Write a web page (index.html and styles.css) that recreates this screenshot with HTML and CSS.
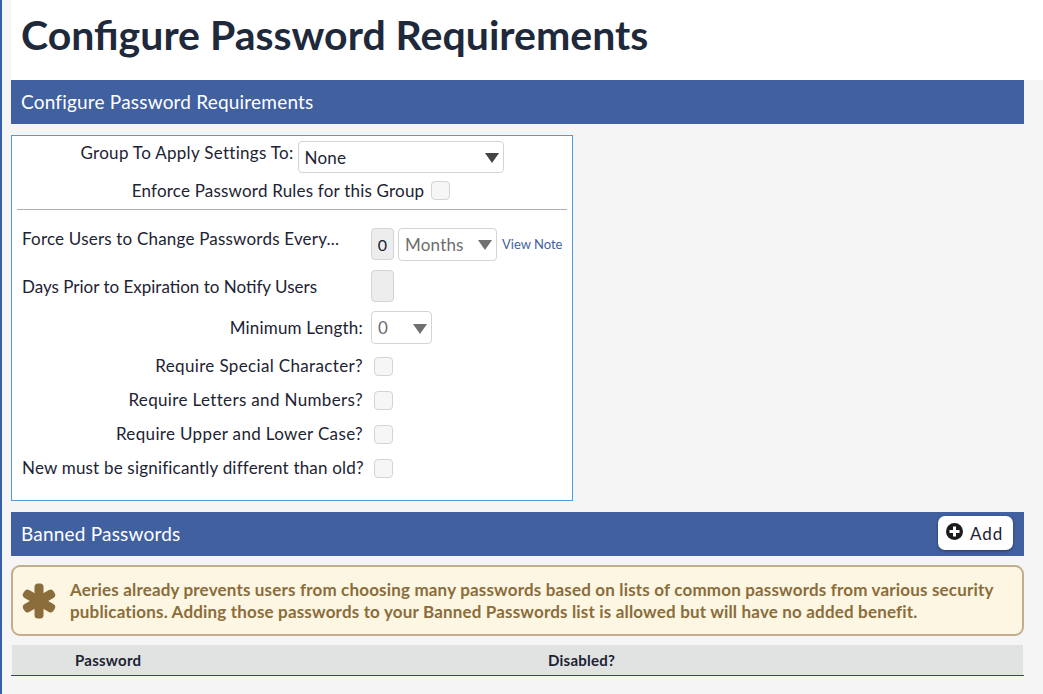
FILE: index.html
```html
<!DOCTYPE html>
<html lang="en">
<head>
  <meta charset="UTF-8">
  <title>Configure Password Requirements</title>
  <link rel="stylesheet" href="styles.css">
</head>
<body>
  <header class="page-head">
    <h1>Configure Password Requirements</h1>
  </header>
  <main class="content">
    <div class="bar">Configure Password Requirements</div>

    <section class="panel">
      <div class="center-row group-row">
        <label>Group To Apply Settings To:</label>
        <div class="select-wrap group-select">
          <select><option>None</option></select>
        </div>
      </div>
      <div class="center-row enforce-row">
        <label>Enforce Password Rules for this Group</label>
        <input type="checkbox" class="check">
      </div>
      <hr>
      <div class="form-row force-row">
        <label class="left">Force Users to Change Passwords Every...</label>
        <div class="controls">
          <div class="num">0</div>
          <div class="select-wrap muted months-select">
            <select disabled><option>Months</option></select>
          </div>
          <a class="note" href="#">View Note</a>
        </div>
      </div>
      <div class="form-row days-row">
        <label class="left">Days Prior to Expiration to Notify Users</label>
        <div class="controls"><div class="num"></div></div>
      </div>
      <div class="form-row length-row">
        <label>Minimum Length:</label>
        <div class="controls">
          <div class="select-wrap muted length-select">
            <select disabled><option>0</option></select>
          </div>
        </div>
      </div>
      <div class="form-row check-row">
        <label>Require Special Character?</label>
        <div class="controls"><input type="checkbox" class="check"></div>
      </div>
      <div class="form-row check-row">
        <label>Require Letters and Numbers?</label>
        <div class="controls"><input type="checkbox" class="check"></div>
      </div>
      <div class="form-row check-row">
        <label>Require Upper and Lower Case?</label>
        <div class="controls"><input type="checkbox" class="check"></div>
      </div>
      <div class="form-row check-row">
        <label>New must be significantly different than old?</label>
        <div class="controls"><input type="checkbox" class="check"></div>
      </div>
    </section>

    <div class="bar bar-action">
      <span>Banned Passwords</span>
      <button class="add-btn">
        <svg width="17" height="17" viewBox="0 0 17 17"><circle cx="8.5" cy="8.5" r="8.5" fill="#1c1c1c"/><path d="M7 3.5h3V7h3.5v3H10v3.5H7V10H3.5V7H7z" fill="#fff"/></svg>
        Add
      </button>
    </div>

    <div class="alert">
      <svg class="alert-icon" width="34" height="36" viewBox="0 0 34 36"><g fill="#8a6d3b"><rect x="12.5" y="0.5" width="9" height="35" rx="3.5"/><rect x="12.5" y="0.5" width="9" height="35" rx="3.5" transform="rotate(60 17 18)"/><rect x="12.5" y="0.5" width="9" height="35" rx="3.5" transform="rotate(120 17 18)"/></g></svg>
      <p>Aeries already prevents users from choosing many passwords based on lists of common passwords from various security publications. Adding those passwords to your Banned Passwords list is allowed but will have no added benefit.</p>
    </div>

    <div class="table-head">
      <div class="table-row">
        <div class="col-password">Password</div>
        <div class="col-disabled">Disabled?</div>
      </div>
    </div>
  </main>
</body>
</html>
```

FILE: styles.css
```css
* {
  box-sizing: border-box;
}

body {
  margin: 0;
  height: 694px;
  overflow: hidden;
  background: #f5f5f5;
  border-left: 2px solid #3560a8;
  font-family: 'Lato', sans-serif;
  font-size: 17px;
  letter-spacing: 0.2px;
  color: #1c2333;
}

.page-head {
  margin-left: 9px;
  height: 80px;
  background: #fff;
  padding: 10px 0 0 10px;
}

h1 {
  margin: 0;
  font-size: 41px;
  line-height: 50px;
  font-weight: 700;
  color: #1e293b;
  letter-spacing: 0;
}

.content {
  margin-left: 9px;
  width: 1013px;
}

.bar {
  height: 44px;
  background: #4060a0;
  color: #fff;
  font-size: 19px;
  letter-spacing: 0.2px;
  line-height: 44px;
  padding-left: 10px;
}

.bar-action {
  display: flex;
  justify-content: space-between;
  align-items: center;
  padding-right: 11px;
}

.add-btn {
  display: flex;
  align-items: center;
  gap: 7px;
  height: 34px;
  width: 75px;
  margin-top: -2px;
  padding: 0 0 0 8px;
  background: #fff;
  border: none;
  border-radius: 7px;
  box-shadow: 0 1px 3px rgba(0, 0, 0, 0.4);
  font-family: inherit;
  font-size: 17px;
  letter-spacing: 1px;
  color: #1c2333;
}

.add-btn svg {
  margin-top: -3px;
}

.panel {
  width: 562px;
  height: 366px;
  margin: 11px 0;
  padding: 5px 5px 0;
  background: #fff;
  border: 1px solid #4d9be0;
}

.center-row {
  display: flex;
  justify-content: center;
}

.group-row {
  height: 32px;
  gap: 4px;
}

.group-row label {
  line-height: 24px;
  letter-spacing: 0.3px;
}

.enforce-row {
  height: 30px;
  margin-top: 2px;
  gap: 7px;
  padding-right: 2px;
  align-items: center;
}

hr {
  height: 1px;
  margin: 4px 0 0;
  border: none;
  background: #aab0b5;
}

.form-row {
  display: flex;
  align-items: center;
  padding-left: 5px;
}

.form-row label {
  width: 341px;
  text-align: right;
  white-space: nowrap;
}

.form-row label.left {
  text-align: left;
}

.controls {
  display: flex;
  align-items: center;
  gap: 4px;
  margin-left: 8px;
}

.force-row {
  height: 34px;
  margin-top: 17px;
}

.force-row label {
  margin-top: -12px;
}

.days-row {
  height: 32px;
  margin-top: 9px;
}

.days-row label {
  letter-spacing: 0;
}

.length-row {
  height: 33px;
  margin-top: 9px;
}

.check-row {
  height: 34px;
}

.check-row label {
  letter-spacing: 0.35px;
  margin-top: -1px;
}

.check-row:last-child label {
  letter-spacing: 0.19px;
}

.check-row .controls {
  margin-left: 11px;
}

.length-row + .check-row {
  margin-top: 5px;
}

.num {
  width: 23px;
  height: 32px;
  background: #ededed;
  border: 1px solid #d4d4d4;
  border-radius: 4px;
  text-align: center;
  line-height: 32px;
  font-size: 16px;
}

.select-wrap {
  position: relative;
}

.select-wrap::after {
  content: "";
  position: absolute;
  right: 5px;
  top: 50%;
  margin-top: -4px;
  border-left: 7px solid transparent;
  border-right: 7px solid transparent;
  border-top: 10px solid #444;
}

.select-wrap.muted::after {
  border-top-color: #707070;
}

select {
  display: block;
  width: 100%;
  height: 100%;
  padding: 0 0 0 6px;
  appearance: none;
  background: #fff;
  border: 1px solid #d4d4d4;
  border-radius: 4px;
  font-family: inherit;
  font-size: 17px;
  letter-spacing: 0.2px;
  color: #1c2333;
  opacity: 1;
}

.muted select {
  color: #6d6d6d;
}

.group-select {
  width: 206px;
  height: 32px;
}

.months-select {
  width: 99px;
  height: 33px;
}

.length-select {
  width: 61px;
  height: 33px;
}

.note {
  margin-left: 1px;
  font-size: 13px;
  letter-spacing: 0;
  color: #3f5f9f;
  text-decoration: none;
}

.check {
  width: 19px;
  height: 19px;
  margin: 0;
  appearance: none;
  background: #f6f6f6;
  border: 1px solid #d4d4d4;
  border-radius: 4px;
}

.alert {
  display: flex;
  align-items: center;
  height: 71px;
  margin-top: 9px;
  padding-left: 9px;
  background: #fdf6e3;
  border: 2px solid #c2ae8c;
  border-radius: 9px;
}

.alert-icon {
  flex: none;
}

.alert p {
  margin: 0 0 0 14px;
  width: 940px;
  font-size: 17px;
  letter-spacing: 0.17px;
  font-weight: 700;
  line-height: 22px;
  color: #8a6d3b;
}

.table-head {
  height: 31px;
  margin-top: 9px;
  border-bottom: 1px solid #33476e;
}

.table-row {
  display: flex;
  height: 30px;
  margin: 0 1px;
  background: #e1e3e2;
  line-height: 30px;
  font-size: 15px;
  letter-spacing: 0.25px;
  font-weight: 700;
  color: #1c2333;
}

.col-password {
  width: 536px;
  padding-left: 63px;
}
```
